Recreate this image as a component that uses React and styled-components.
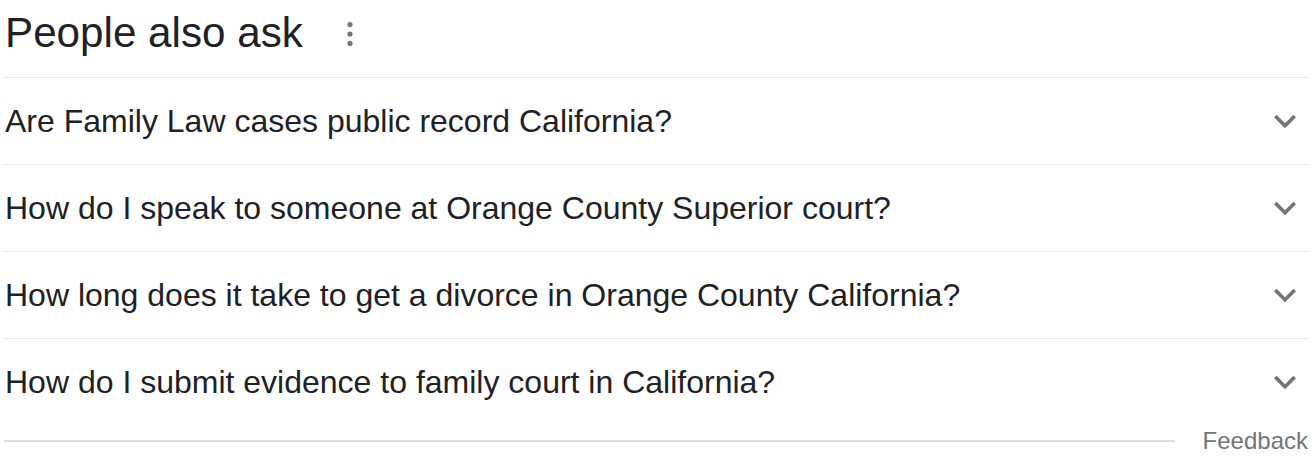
import React from "react";
import styled, { createGlobalStyle } from "styled-components";

const GlobalStyle = createGlobalStyle`
  body {
    margin: 0;
    background: #ffffff;
    font-family: "Liberation Sans", Arial, sans-serif;
  }
`

const Container = styled.div`
  display: flex;
  flex-direction: column;
  padding: 0 4px;
  color: #202124;
`

const Header = styled.div`
  display: flex;
  align-items: center;
  height: 65px;
  padding-bottom: 12px;
  border-bottom: 1px solid #e8eaed;
`

const Title = styled.h2`
  margin: 0 0 0 1px;
  font-size: 42.2px;
  font-weight: 400;
  line-height: 52px;
`

const MenuButton = styled.div`
  display: flex;
  margin-left: 42px;
  margin-top: 3px;
  color: #70757a;
`

const Question = styled.div`
  display: flex;
  align-items: center;
  justify-content: space-between;
  height: 86px;
  border-bottom: ${props => (props.last ? "none" : "1px solid #e8eaed")};
  cursor: pointer;
`

const QuestionText = styled.span`
  font-size: 32px;
  line-height: 40px;
  margin-left: 1px;
`

const Chevron = styled.div`
  display: flex;
  margin-right: 1px;
  color: #70757a;
`

const Footer = styled.div`
  display: flex;
  align-items: center;
  height: 30px;
  margin-top: 1px;
`

const FooterLine = styled.div`
  flex: 1;
  height: 2px;
  background: #dadce0;
  margin-right: 28px;
`

const FeedbackLink = styled.span`
  font-size: 24px;
  color: #70757a;
`

const questions = [
  "Are Family Law cases public record California?",
  "How do I speak to someone at Orange County Superior court?",
  "How long does it take to get a divorce in Orange County California?",
  "How do I submit evidence to family court in California?"
]

function MoreIcon() {
  return (
    <svg width="10" height="30" viewBox="0 0 10 30">
      <circle cx="5" cy="5.6" r="2.6" fill="currentColor"/>
      <circle cx="5" cy="15" r="2.6" fill="currentColor"/>
      <circle cx="5" cy="24.4" r="2.6" fill="currentColor"/>
    </svg>
  )
}

function ExpandIcon() {
  return (
    <svg width="44" height="44" viewBox="0 0 24 24">
      <path fill="currentColor" d="M16.59 8.59L12 13.17 7.41 8.59 6 10l6 6 6-6z"/>
    </svg>
  )
}

export default function App() {
  return (
    <Container>
      <GlobalStyle/>
      <Header>
        <Title>People also ask</Title>
        <MenuButton><MoreIcon/></MenuButton>
      </Header>
      {questions.map((q, i) => (
        <Question key={q} last={i === questions.length - 1}>
          <QuestionText>{q}</QuestionText>
          <Chevron><ExpandIcon/></Chevron>
        </Question>
      ))}
      <Footer>
        <FooterLine/>
        <FeedbackLink>Feedback</FeedbackLink>
      </Footer>
    </Container>
  )
}
